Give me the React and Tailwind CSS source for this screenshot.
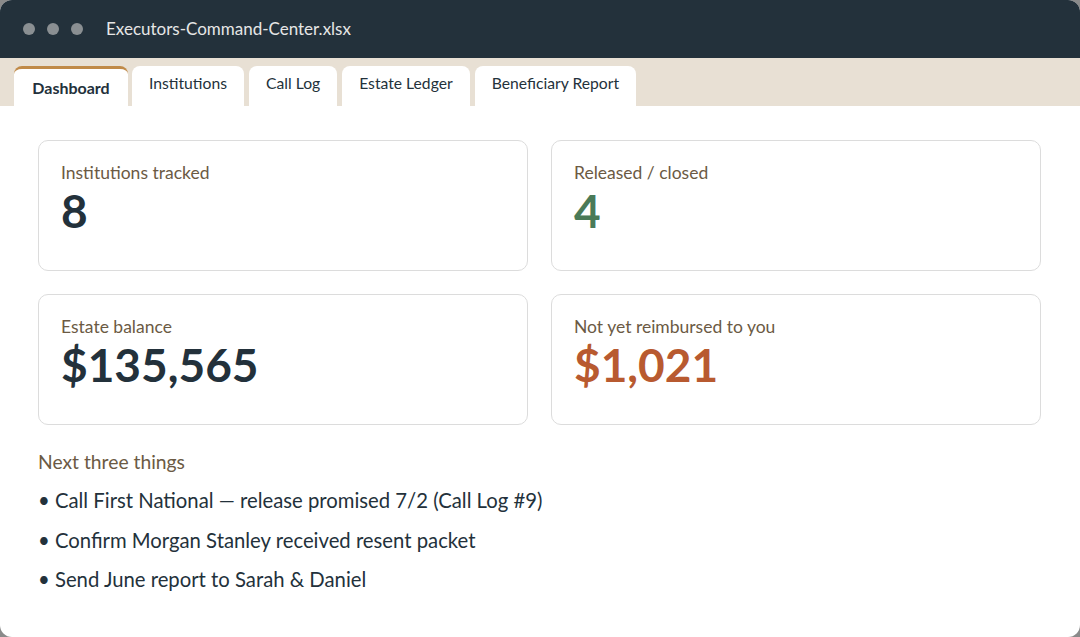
import React from "react";

const tabs = ["Dashboard", "Institutions", "Call Log", "Estate Ledger", "Beneficiary Report"];

function Card({ label, value, color }) {
  return (
    <div className="h-[131px] rounded-[10px] border border-[#dcdcdc] bg-white pl-[22px] pt-[21px]">
      <div className="text-[17.5px] leading-[22px] text-[#6b5a44]">{label}</div>
      <div className={`mt-[1px] text-[46px] font-bold leading-[52px] ${color}`}>{value}</div>
    </div>
  );
}

export default function App() {
  return (
    <div className="h-[637px] w-[1080px] bg-[#8a8a8a]" style={{ fontFamily: "Lato, 'Noto Sans', sans-serif" }}>
      <div className="flex h-full flex-col overflow-hidden rounded-[12px] bg-white">
        <div className="flex h-[58px] items-center bg-[#23313b] pl-[23px]">
          <div className="flex gap-[12px]">
            <span className="h-[12px] w-[12px] rounded-full bg-[#8a8f92]" />
            <span className="h-[12px] w-[12px] rounded-full bg-[#8a8f92]" />
            <span className="h-[12px] w-[12px] rounded-full bg-[#8a8f92]" />
          </div>
          <div className="ml-[23px] text-[17px] text-[#e6e6e6]">Executors-Command-Center.xlsx</div>
        </div>
        <div className="flex h-[48px] items-end gap-[5px] bg-[#e8e0d4] pl-[14px]">
          {tabs.map((t, i) =>
            i === 0 ? (
              <div
                key={t}
                className="mr-[-1px] flex h-[40px] w-[114px] items-center justify-center rounded-t-[8px] border-t-[3px] border-[#c08a48] bg-white pt-[1px] text-[16px] font-bold text-[#23313b]"
              >
                {t}
              </div>
            ) : (
              <div
                key={t}
                className="flex h-[40px] items-center rounded-t-[8px] bg-white px-[17px] pb-[5px] text-[15.7px] text-[#23313b]"
              >
                {t}
              </div>
            )
          )}
        </div>
        <div className="flex-1 pl-[38px] pt-[34px]">
          <div className="grid grid-cols-[490px_490px] gap-[23px]">
            <Card label="Institutions tracked" value="8" color="text-[#23313b]" />
            <Card label="Released / closed" value="4" color="text-[#4a7a58]" />
            <Card label="Estate balance" value="$135,565" color="text-[#23313b]" />
            <Card label="Not yet reimbursed to you" value="$1,021" color="text-[#b85a30]" />
          </div>
          <div className="mt-[25px] text-[19.3px] leading-[24px] text-[#6b5a44]">Next three things</div>
          <ul className="mt-[14px] flex flex-col gap-[14.5px] text-[20.3px] leading-[25px] text-[#23313b]">
            <li>• Call First National — release promised 7/2 (Call Log #9)</li>
            <li>• Confirm Morgan Stanley received resent packet</li>
            <li>• Send June report to Sarah &amp; Daniel</li>
          </ul>
        </div>
      </div>
    </div>
  );
}
